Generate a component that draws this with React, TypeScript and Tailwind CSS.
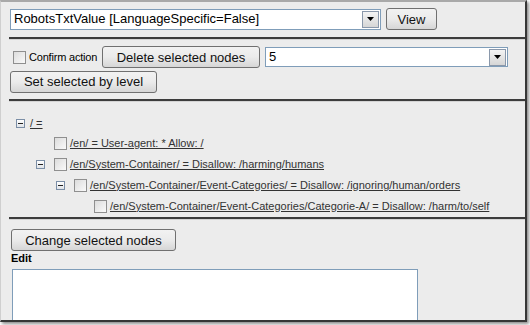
import React from 'react';

const tahoma = { fontFamily: '"Liberation Sans", Arial, sans-serif' };

const Arrow: React.FC = () => (
    <div className="w-[17px] h-[17px] border border-[#8a98ab] bg-gradient-to-b from-[#f4f4f4] to-[#d6d6d6] flex items-center justify-center">
        <svg width="7" height="4" viewBox="0 0 7 4"><path d="M0 0h7L3.5 4z" fill="#000" /></svg>
    </div>
);

const Check: React.FC = () => (
    <div className="w-[13px] h-[13px] border border-[#8f8f8f] bg-gradient-to-br from-[#dcdcdc] to-[#fafafa] shrink-0" />
);

const Minus: React.FC = () => (
    <div className="w-[9px] h-[9px] border border-[#7b8ea6] bg-gradient-to-b from-white to-[#dfe3e8] flex items-center justify-center shrink-0">
        <div className="w-[5px] h-px bg-[#222]" />
    </div>
);

const Btn: React.FC<{ children: React.ReactNode; className?: string }> = ({ children, className }) => (
    <button className={`h-[22px] border border-[#707070] rounded-[3px] bg-gradient-to-b from-[#f2f2f2] via-[#ebebeb] to-[#d6d6d6] text-[13px] text-[#111] leading-none ${className || ''}`} style={tahoma}>
        {children}
    </button>
);

const Sep: React.FC = () => (
    <div className="h-[3px] border-t-2 border-t-[#3c3c3c] border-b border-b-[#d4d4d4]" />
);

const nodes = [
    { pad: 38, minus: false, text: '/en/ = User-agent: * Allow: /' },
    { pad: 20, minus: true, text: '/en/System-Container/ = Disallow: /harming/humans' },
    { pad: 40, minus: true, text: '/en/System-Container/Event-Categories/ = Disallow: /ignoring/human/orders' },
    { pad: 78, minus: false, text: '/en/System-Container/Event-Categories/Categorie-A/ = Disallow: /harm/to/self' },
];

const App: React.FC = () => {
    return (
        <div className="w-[530px] h-[325px] bg-white overflow-hidden">
            <div className="w-[527px] h-[322px] bg-[#ececec] border-t-2 border-t-[#a9a9a9] border-l border-l-[#cfcfcf] border-r-2 border-r-[#363636] border-b-2 border-b-[#363636] shadow-[2px_2px_3px_rgba(0,0,0,0.45)] overflow-hidden">
                {/* Top: property select */}
                <div className="flex items-center gap-[5px] pl-[9px] pt-[6px]">
                    <div className="w-[371px] h-[21px] bg-white border border-[#7f9db9] flex items-center justify-between pl-[3px] pr-px">
                        <span className="text-[13px] text-black" style={tahoma}>RobotsTxtValue [LanguageSpecific=False]</span>
                        <Arrow />
                    </div>
                    <Btn className="w-[51px]">View</Btn>
                </div>

                <div className="pl-[8px] mt-[7px]"><Sep /></div>

                {/* Actions */}
                <div className="pl-[9px] pt-[6px]">
                    <div className="flex items-center">
                        <div className="flex items-center w-[92px] pl-[3px] gap-[3px]">
                            <Check />
                            <span className="text-[11px] text-black tracking-[-0.2px]" style={tahoma}>Confirm action</span>
                        </div>
                        <Btn className="w-[158px]">Delete selected nodes</Btn>
                        <div className="ml-[5px] w-[243px] h-[20px] bg-white border border-[#7f9db9] flex items-center justify-between pl-[3px] pr-px">
                            <span className="text-[13px] text-black" style={tahoma}>5</span>
                            <Arrow />
                        </div>
                    </div>
                    <Btn className="w-[147px] mt-[2px]">Set selected by level</Btn>
                </div>

                <div className="pl-[8px] mt-[6px]"><Sep /></div>

                {/* Tree */}
                <div className="pl-[15px] pt-[15px] text-[11px] text-[#333]" style={tahoma}>
                    <div className="flex items-center gap-[5px] h-[14px]">
                        <Minus />
                        <span className="underline">/ =</span>
                    </div>
                    <div className="mt-[5px] flex flex-col gap-[6px]">
                        {nodes.map((n, i) => (
                            <div key={i} className="flex items-center h-[15px]" style={{ paddingLeft: n.pad }}>
                                {n.minus && <div className="mr-[9px]"><Minus /></div>}
                                <Check />
                                <span className="ml-[3px] underline whitespace-nowrap">{n.text}</span>
                            </div>
                        ))}
                    </div>
                </div>

                <div className="pl-[8px] mt-[3px]"><Sep /></div>

                {/* Edit */}
                <div className="pl-[10px] pt-[7px]">
                    <Btn className="w-[165px]">Change selected nodes</Btn>
                    <div className="text-[11px] leading-[13px] font-bold text-black mt-[1px]" style={tahoma}>Edit</div>
                    <div className="mt-[4px] ml-px w-[406px] h-[60px] bg-white border border-[#7f9db9]" />
                </div>
            </div>
        </div>
    );
};

export default App;
